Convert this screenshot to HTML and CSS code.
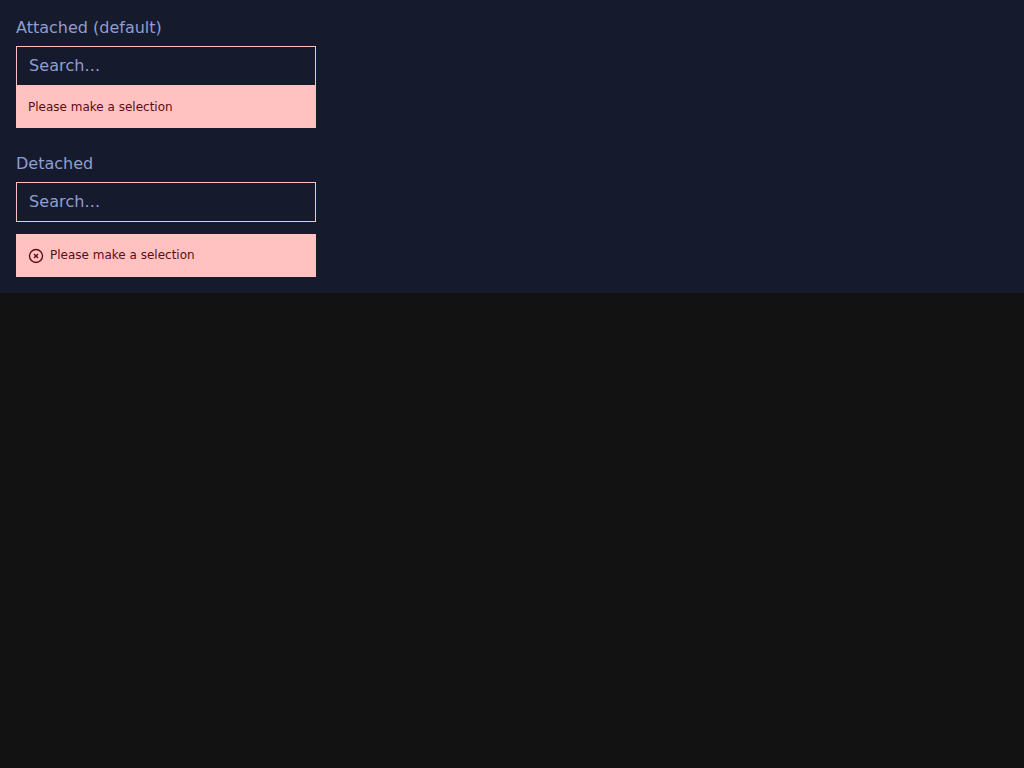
FILE: index.html
```html
<!DOCTYPE html>
<html lang="en">
<head>
  <meta charset="UTF-8" />
  <title>Search validation</title>
  <link rel="stylesheet" href="styles.css">
</head>
<body>
  <div class="panel">
    <div class="field">
      <label class="label" for="attached">Attached (default)</label>
      <input class="search" id="attached" type="text" placeholder="Search...">
      <div class="error attached">Please make a selection</div>
    </div>

    <div class="field">
      <label class="label" for="detached">Detached</label>
      <input class="search" id="detached" type="text" placeholder="Search...">
      <div class="error detached">
        <svg class="error-icon" viewBox="0 0 16 16" width="16" height="16" fill="none" stroke="currentColor" aria-hidden="true">
          <circle cx="8" cy="8" r="6.5" stroke-width="1.4" />
          <path d="M6 6l4 4M10 6l-4 4" stroke-width="1.4" />
        </svg>
        <span class="error-text">Please make a selection</span>
      </div>
    </div>
  </div>
</body>
</html>
```

FILE: styles.css
```css
body {
  margin: 0;
  background: #121212;
  font-family: 'DejaVu Sans', sans-serif;
}
.panel {
  background: #161a2d;
  padding: 16px;
  display: flex;
  flex-direction: column;
  gap: 24px;
}
.field {
  width: 300px;
}
.label {
  display: block;
  color: #8e9ecf;
  font-size: 16px;
  line-height: 24px;
  margin-bottom: 6px;
}
.search {
  display: block;
  box-sizing: border-box;
  width: 100%;
  height: 40px;
  padding: 0 12px 2px;
  background: #161a2d;
  border: 1px solid #ffc2c0;
  border-radius: 0;
  color: #8e9ecf;
  font-family: inherit;
  font-size: 16px;
  letter-spacing: 0.1px;
  outline: none;
}
.search::placeholder {
  color: #8e9ecf;
  opacity: 1;
}
.error {
  box-sizing: border-box;
  height: 43px;
  padding: 0 12px;
  background: #ffc2c0;
  color: #5f0a18;
  font-size: 12px;
  display: flex;
  align-items: center;
}
.error.attached {
  margin-top: -1px;
}
.error.detached {
  margin-top: 12px;
  gap: 6px;
}
.error-icon {
  flex: none;
}
.error-text {
  padding-bottom: 2px;
}
```
